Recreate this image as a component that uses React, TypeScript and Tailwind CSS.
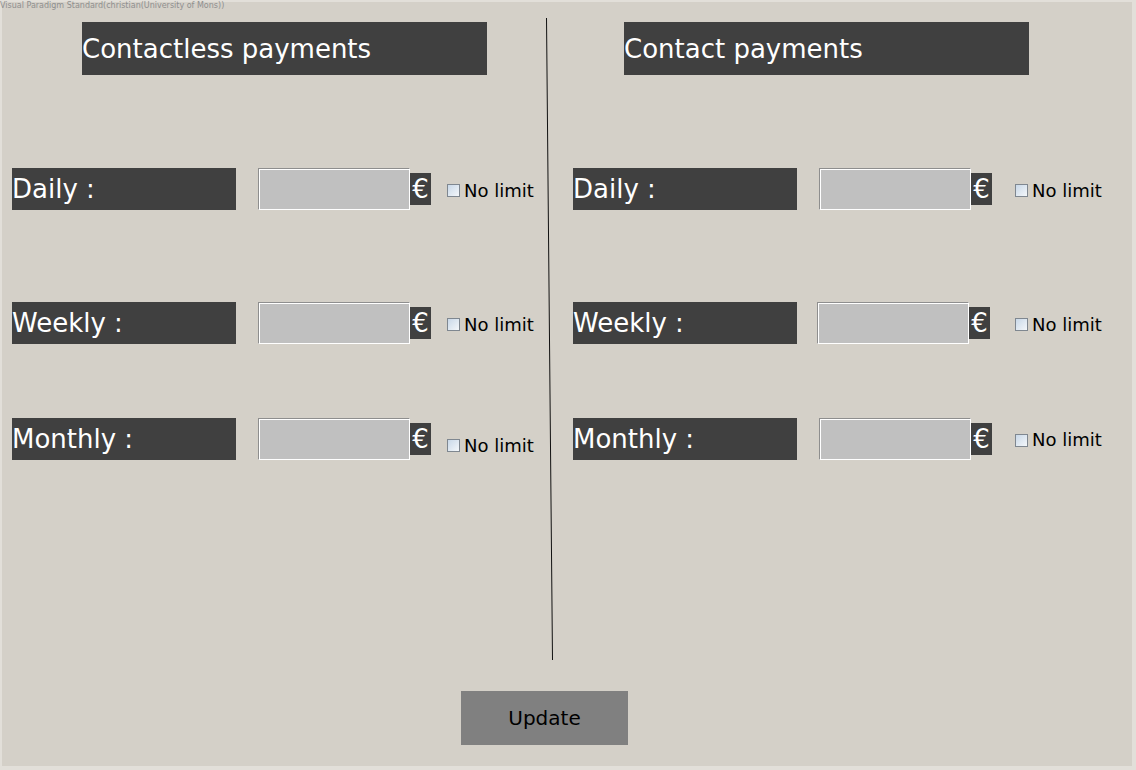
import React from "react";

const font = { fontFamily: '"DejaVu Sans", Verdana, sans-serif' };

interface RowProps {
  label: string;
  inputGap: string;
  checkGap: string;
  checkOffset?: string;
}

function LimitRow({ label, inputGap, checkGap, checkOffset = "mt-[3px]" }: RowProps) {
  return (
    <div className="flex items-center h-[42px]">
      <div className="w-[224px] h-[42px] bg-[#404040] text-white text-[26px] flex items-center leading-none">
        {label}
      </div>
      <div
        className={`${inputGap} w-[152px] h-[42px] bg-[#c0c0c0] border-t border-l border-[#8e8e8e] border-b border-r border-b-white border-r-white shadow-[inset_1px_1px_0_#ffffff]`}
      />
      <div className="w-[21px] h-[32px] bg-[#404040] text-white text-[26px] flex items-center justify-center leading-none">
        €
      </div>
      <label className={`${checkGap} ${checkOffset} flex items-center gap-[4px] text-[18px] text-black leading-none`}>
        <span className="w-[13px] h-[13px] border border-[#7f8790] bg-gradient-to-br from-[#c9d8e8] to-[#f4f7fa]" />
        No limit
      </label>
    </div>
  );
}

export default function App() {
  return (
    <div className="w-[1136px] h-[770px] bg-[#e2dfd9] p-[2px]" style={font}>
      <div className="relative w-[1130px] h-[764px] bg-[#d4d0c8] flex flex-col">
        <div className="absolute left-[-2px] top-0 text-[8px] text-[#8f8f8f] leading-none">
          Visual Paradigm Standard(christian(University of Mons))
        </div>

        <svg className="absolute left-0 top-0 pointer-events-none" width="1130" height="764">
          <line x1="544.5" y1="16" x2="550.5" y2="658" stroke="#111" strokeWidth="1" />
        </svg>

        <div className="flex h-[689px]">
          {/* contactless */}
          <div className="w-[571px] pl-[10px] pt-[20px] flex flex-col">
            <div className="ml-[70px] w-[405px] h-[53px] bg-[#404040] text-white text-[26px] flex items-center leading-none">
              Contactless payments
            </div>
            <div className="mt-[93px]">
              <LimitRow label="Daily :" inputGap="ml-[22px]" checkGap="ml-[16px]" />
            </div>
            <div className="mt-[92px]">
              <LimitRow label="Weekly :" inputGap="ml-[22px]" checkGap="ml-[16px]" />
            </div>
            <div className="mt-[74px]">
              <LimitRow label="Monthly :" inputGap="ml-[22px]" checkGap="ml-[16px]" checkOffset="mt-[13px]" />
            </div>
          </div>

          {/* contact */}
          <div className="flex-1 pt-[20px] flex flex-col">
            <div className="ml-[51px] w-[405px] h-[53px] bg-[#404040] text-white text-[26px] flex items-center leading-none">
              Contact payments
            </div>
            <div className="mt-[93px]">
              <LimitRow label="Daily :" inputGap="ml-[22px]" checkGap="ml-[23px]" />
            </div>
            <div className="mt-[92px]">
              <LimitRow label="Weekly :" inputGap="ml-[20px]" checkGap="ml-[25px]" />
            </div>
            <div className="mt-[74px]">
              <LimitRow label="Monthly :" inputGap="ml-[22px]" checkGap="ml-[23px]" checkOffset="mt-[2px]" />
            </div>
          </div>
        </div>

        <div className="pl-[459px]">
          <button className="w-[167px] h-[54px] bg-[#808080] text-black text-[20px] leading-none">
            Update
          </button>
        </div>
      </div>
    </div>
  );
}
